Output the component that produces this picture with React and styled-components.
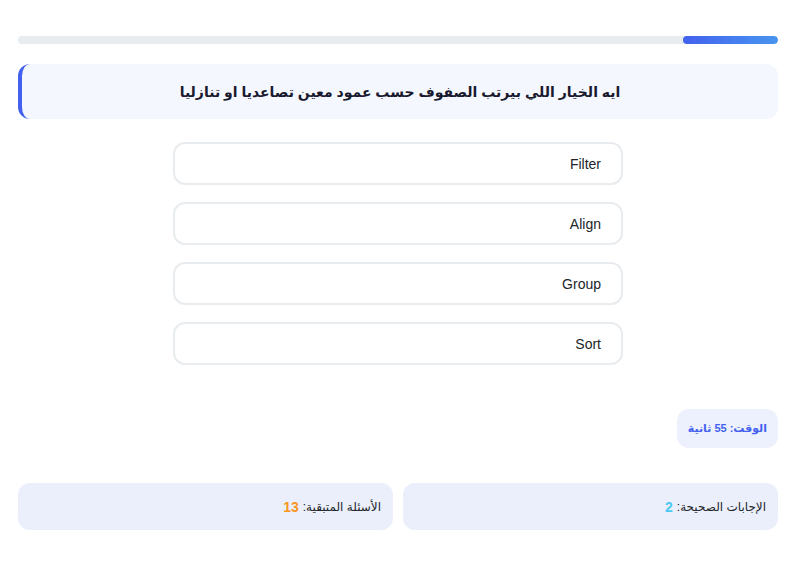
import React from 'react'
import styled, { createGlobalStyle } from 'styled-components'

const options = ['Filter', 'Align', 'Group', 'Sort']

function App() {
    return (
        <Page dir="rtl">
            <GlobalStyle />
            <Progress>
                <Fill style={{ width: `${(1 / 8) * 100}%` }} />
            </Progress>
            <Question>ايه الخيار اللي بيرتب الصفوف حسب عمود معين تصاعديا او تنازليا</Question>
            <Options>
                {options.map((o) => (
                    <Option key={o}>{o}</Option>
                ))}
            </Options>
            <TimerRow>
                <Timer>الوقت: 55 ثانية</Timer>
            </TimerRow>
            <Stats>
                <Stat>
                    الإجابات الصحيحة: <Num color="#4cc9f0">2</Num>
                </Stat>
                <Stat>
                    الأسئلة المتبقية: <Num color="#f8961e">13</Num>
                </Stat>
            </Stats>
        </Page>
    )
}

export default App

const GlobalStyle = createGlobalStyle`
  body {
    margin: 0;
    background: #ffffff;
    font-family: "Liberation Sans", "DejaVu Sans", Arial, sans-serif;
    color: #212529;
  }
`

const Page = styled.div`
    width: 760px;
    margin-left: 18px;
    padding-top: 36px;
    display: flex;
    flex-direction: column;
`

const Progress = styled.div`
    height: 8px;
    background: #e9ecef;
    border-radius: 4px;
    overflow: hidden;
    display: flex;
`

const Fill = styled.div`
    height: 100%;
    border-radius: 4px;
    background: linear-gradient(90deg, #4361ee, #4895ef);
`

const Question = styled.div`
    margin-top: 20px;
    height: 55px;
    box-sizing: border-box;
    background: #f5f7ff;
    border-left: 4px solid #4361ee;
    border-radius: 12px;
    display: flex;
    align-items: center;
    justify-content: center;
    font-size: 14px;
    font-weight: bold;
    color: #1a1a2e;
`

const Options = styled.div`
    margin: 23px auto 0;
    width: 450px;
    display: flex;
    flex-direction: column;
    gap: 17px;
`

const Option = styled.div`
    height: 43px;
    box-sizing: border-box;
    border: 2px solid #e9ecef;
    border-radius: 12px;
    background: #fff;
    display: flex;
    align-items: center;
    padding: 0 20px;
    font-size: 14px;
    color: #212529;
`

const TimerRow = styled.div`
    margin-top: 44px;
    display: flex;
`

const Timer = styled.div`
    height: 39px;
    box-sizing: border-box;
    padding: 0 11px;
    display: flex;
    align-items: center;
    background: #edf0fd;
    border-radius: 12px;
    color: #4361ee;
    font-size: 11px;
    font-weight: bold;
`

const Stats = styled.div`
    margin-top: 35px;
    display: grid;
    grid-template-columns: 1fr 1fr;
    gap: 10px;
`

const Stat = styled.div`
    height: 47px;
    box-sizing: border-box;
    padding: 0 12px;
    display: flex;
    align-items: center;
    gap: 4px;
    background: #ebeffc;
    border-radius: 12px;
    font-size: 12px;
    color: #212529;
`

const Num = styled.span`
    color: ${(p) => p.color};
    font-weight: bold;
    font-size: 14px;
`
